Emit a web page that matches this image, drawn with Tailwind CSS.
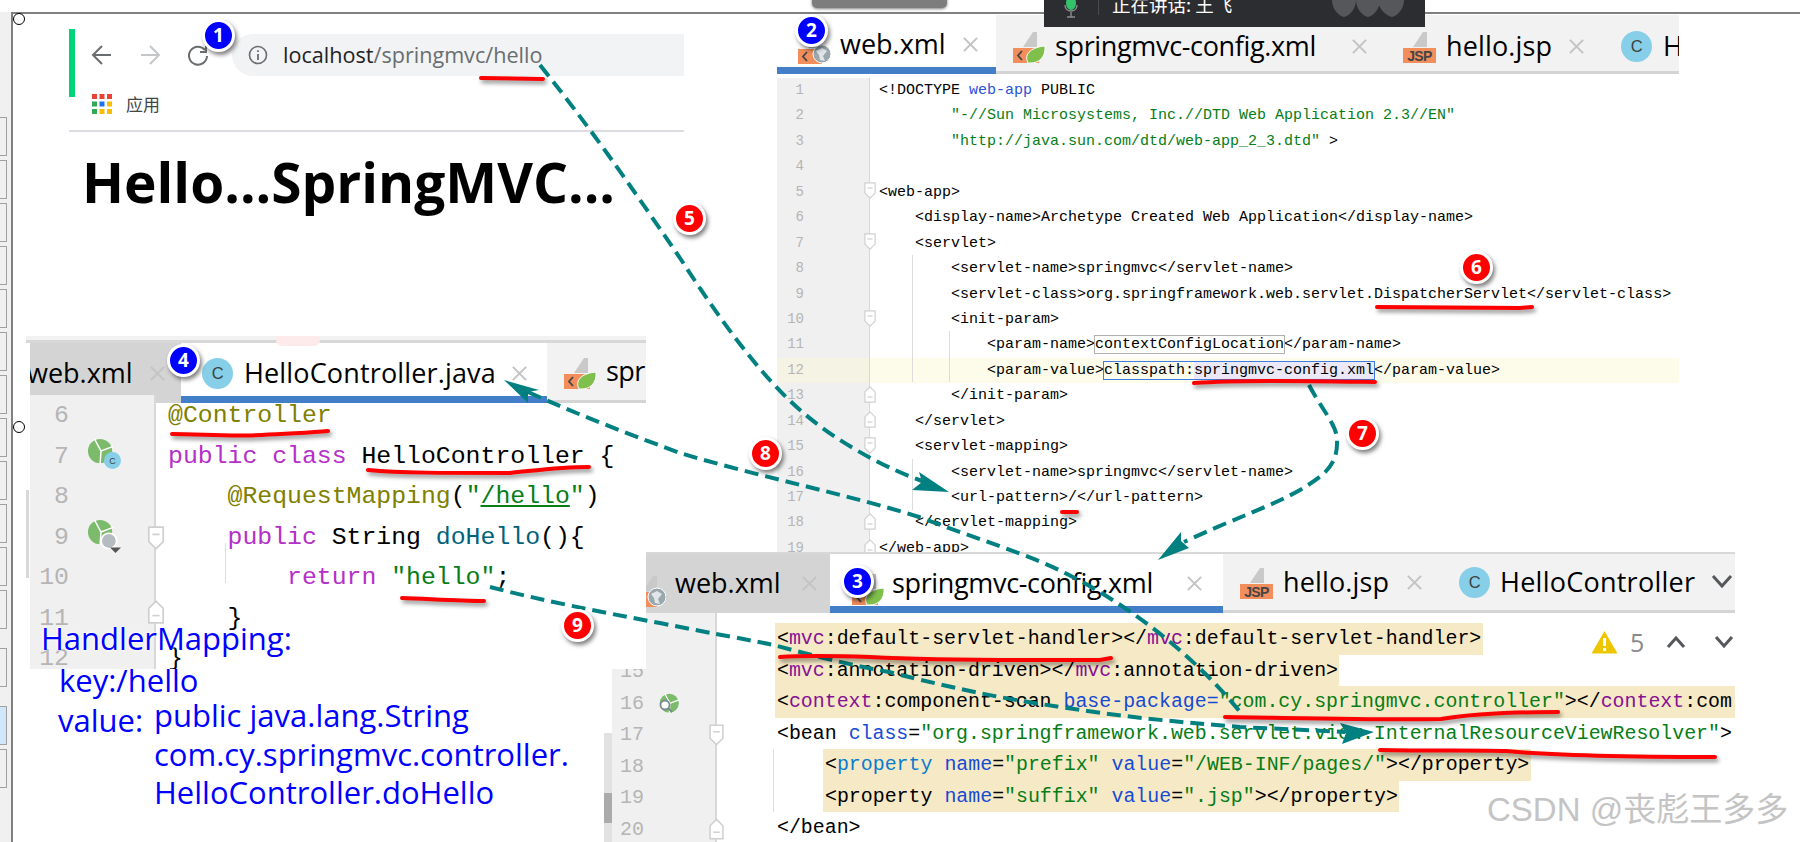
<!DOCTYPE html>
<html lang="en">

<head>
  <meta charset="UTF-8" />
  <title>SpringMVC flow</title>
  <script src="https://cdn.jsdelivr.net/npm/@tailwindcss/browser@4"></script>
</head>

<body class="bg-white overflow-hidden">
  <!-- shared icons -->
  <svg class="hidden">
    <symbol id="page" viewBox="0 0 33 34">
      <path d="M10 18 L20 3 H24 V18 Z M0 0" fill="#c9c9c9" />
      <rect x="3" y="21" width="22" height="2" fill="#c9c9c9" />
    </symbol>
    <symbol id="leaf" viewBox="0 0 33 34">
      <use href="#page" width="33" height="34" />
      <rect x="0" y="19" width="26" height="15" fill="#f28d5c" />
      <path d="M9 22 L5 26.5 L9 31" fill="none" stroke="#444" stroke-width="1.8" />
      <path d="M15 34 C10 24 20 18 32 17 C33 28 26 34 18 34 Z" fill="#7fc04c" stroke="#fff" />
    </symbol>
    <symbol id="web" viewBox="0 0 33 34">
      <use href="#page" width="33" height="34" />
      <rect x="0" y="19" width="24" height="15" fill="#f28d5c" />
      <path d="M9 22 L5 26.5 L9 31" fill="none" stroke="#444" stroke-width="1.8" />
      <circle cx="24" cy="24" r="9" fill="#9aa7ad" stroke="#fff" />
      <path d="M18 21 L24 18 L29 21 L25 26 L27 31 L22 30 L21 25 Z" fill="#dfe5e8" />
    </symbol>
    <symbol id="jsp" viewBox="0 0 33 34">
      <use href="#page" width="33" height="34" />
      <rect x="0" y="19" width="33" height="15" fill="#f28d5c" />
      <text x="16.5" y="32" text-anchor="middle" font-family="Liberation Sans" font-weight="700" font-size="14" fill="#444">JSP</text>
    </symbol>
    <symbol id="cls" viewBox="0 0 32 32">
      <circle cx="16" cy="16" r="16" fill="#87cfe8" />
      <text x="16" y="22" text-anchor="middle" font-family="Liberation Sans" font-size="17" fill="#3c3f41">C</text>
    </symbol>
    <symbol id="close" viewBox="0 0 18 18">
      <path d="M2 2 L16 16 M16 2 L2 16" stroke="#c4c4c4" stroke-width="2.2" fill="none" />
    </symbol>
    <symbol id="foldo" viewBox="0 0 14 20">
      <path d="M1 1 H13 V13 L7 19 L1 13 Z" fill="#fff" stroke="#cfcfcf" stroke-width="1.4" />
      <path d="M4 7 H10" stroke="#cfcfcf" stroke-width="1.4" />
    </symbol>
    <symbol id="foldc" viewBox="0 0 14 20">
      <path d="M1 19 H13 V7 L7 1 L1 7 Z" fill="#fff" stroke="#cfcfcf" stroke-width="1.4" />
      <path d="M4 13 H10" stroke="#cfcfcf" stroke-width="1.4" />
    </symbol>
    <symbol id="bean" viewBox="0 0 30 30">
      <circle cx="14" cy="14" r="13" fill="#7cba6c" />
      <path d="M8 1 L15 14 L28 9 M15 14 L14 28" stroke="#fff" stroke-width="1.6" fill="none" />
    </symbol>
  </svg>

  <div class="relative w-[1800px] h-[842px] overflow-hidden">

    <!-- desktop frame -->
    <div class="absolute left-0 top-[12px] w-[12px] h-[830px] bg-[#f0f0f0] flex flex-col gap-[4px] pt-[105px]">
      <div class="w-[7px] h-[39px] shrink-0 border border-l-0 border-[#a0a0a0]"></div>
      <div class="w-[7px] h-[39px] shrink-0 border border-l-0 border-[#a0a0a0]"></div>
      <div class="w-[7px] h-[39px] shrink-0 border border-l-0 border-[#a0a0a0]"></div>
      <div class="w-[7px] h-[39px] shrink-0 border border-l-0 border-[#a0a0a0]"></div>
      <div class="w-[7px] h-[39px] shrink-0 border border-l-0 border-[#a0a0a0]"></div>
      <div class="w-[7px] h-[39px] shrink-0 border border-l-0 border-[#a0a0a0]"></div>
      <div class="w-[7px] h-[39px] shrink-0 border border-l-0 border-[#a0a0a0]"></div>
      <div class="w-[7px] h-[39px] shrink-0 border border-l-0 border-[#a0a0a0]"></div>
      <div class="w-[7px] h-[39px] shrink-0 border border-l-0 border-[#a0a0a0]"></div>
      <div class="w-[7px] h-[39px] shrink-0 border border-l-0 border-[#a0a0a0]"></div>
      <div class="w-[7px] h-[39px] shrink-0 border border-l-0 border-[#a0a0a0]"></div>
      <div class="w-[7px] h-[39px] shrink-0 border border-l-0 border-[#a0a0a0]"></div>
      <div class="w-[7px] h-[39px] shrink-0 border border-l-0 border-[#a0a0a0] mt-[15px]"></div>
      <div class="w-[7px] h-[39px] shrink-0 border border-l-0 border-[#a0a0a0] mt-[15px] bg-[#cfe6fb]"></div>
      <div class="w-[7px] h-[39px] shrink-0 border border-l-0 border-[#a0a0a0]"></div>
    </div>
    <div class="absolute left-[12px] top-[12px] right-0 h-[2px] bg-[#808080]"></div>
    <div class="absolute left-[11px] top-[12px] w-[2px] h-[830px] bg-[#808080]"></div>
    <div class="absolute left-[13px] top-[13px] w-[12px] h-[12px] rounded-full border border-black bg-white"></div>
    <div class="absolute left-[13px] top-[421px] w-[12px] h-[12px] rounded-full border border-black bg-white"></div>
    <div class="absolute left-[812px] top-[-6px] w-[135px] h-[14px] rounded-[5px] bg-[#7d7d7d] shadow-[0_1px_3px_rgba(0,0,0,.5)]"></div>

    <!-- web.xml editor -->
    <div class="absolute left-[777px] top-[15px] w-[902px] h-[537px] overflow-hidden bg-white">
      <div class="flex h-[59px] font-['Open_Sans'] text-[27px] text-black tracking-[-0.6px]">
        <div class="w-[219px] shrink-0 flex items-center bg-white border-b-[7px] border-[#427fc8] pl-[21px] pt-[7px]">
          <svg class="w-[33px] h-[34px] shrink-0 mt-[4px]"><use href="#web" /></svg>
          <span class="w-[112px] ml-[9px] shrink-0 tracking-[0px]">web.xml</span>
          <svg class="w-[17px] h-[17px] shrink-0 ml-[10px]"><use href="#close" /></svg>
        </div>
        <div class="flex-1 flex items-center bg-[#f2f2f2] border-b-[3px] border-[#d4d4d4] pl-[17px] pt-[6px] min-w-0">
          <svg class="w-[33px] h-[34px] shrink-0"><use href="#leaf" /></svg>
          <span class="w-[288px] ml-[9px] shrink-0 tracking-[-0.35px]">springmvc-config.xml</span>
          <svg class="w-[17px] h-[17px] shrink-0 ml-[8px]"><use href="#close" /></svg>
          <svg class="w-[33px] h-[34px] shrink-0 ml-[35px]"><use href="#jsp" /></svg>
          <span class="w-[112px] ml-[10px] shrink-0 tracking-[0.15px]">hello.jsp</span>
          <svg class="w-[17px] h-[17px] shrink-0 ml-[10px]"><use href="#close" /></svg>
          <svg class="w-[31px] h-[31px] shrink-0 ml-[36px]"><use href="#cls" /></svg>
          <span class="ml-[11px] shrink-0 tracking-[0.2px]">HelloController</span>
        </div>
      </div>
      <div class="relative mt-[2px] pt-[2px] font-['Liberation_Mono'] text-[15px] leading-[25.45px] text-black">
        <div class="flex h-[25.45px]"><div class="w-[93px] pr-[65px] text-right text-[14px] text-[#b5b5b5] bg-[#f0f0f0] border-r border-[#d8d8d8]">1</div><pre class="ml-[9px] font-['Liberation_Mono']">&lt;!DOCTYPE <span class="text-[#2c53d9]">web-app</span> PUBLIC</pre></div>
        <div class="flex h-[25.45px]"><div class="w-[93px] pr-[65px] text-right text-[14px] text-[#b5b5b5] bg-[#f0f0f0] border-r border-[#d8d8d8]">2</div><pre class="ml-[9px] font-['Liberation_Mono'] text-[#067d17]">        "-//Sun Microsystems, Inc.//DTD Web Application 2.3//EN"</pre></div>
        <div class="flex h-[25.45px]"><div class="w-[93px] pr-[65px] text-right text-[14px] text-[#b5b5b5] bg-[#f0f0f0] border-r border-[#d8d8d8]">3</div><pre class="ml-[9px] font-['Liberation_Mono']"><span class="text-[#067d17]">        "http://java.sun.com/dtd/web-app_2_3.dtd"</span> &gt;</pre></div>
        <div class="flex h-[25.45px]"><div class="w-[93px] pr-[65px] text-right text-[14px] text-[#b5b5b5] bg-[#f0f0f0] border-r border-[#d8d8d8]">4</div></div>
        <div class="flex h-[25.45px]"><div class="w-[93px] pr-[65px] text-right text-[14px] text-[#b5b5b5] bg-[#f0f0f0] border-r border-[#d8d8d8]">5</div><pre class="ml-[9px] font-['Liberation_Mono']">&lt;web-app&gt;</pre></div>
        <div class="flex h-[25.45px]"><div class="w-[93px] pr-[65px] text-right text-[14px] text-[#b5b5b5] bg-[#f0f0f0] border-r border-[#d8d8d8]">6</div><pre class="ml-[9px] font-['Liberation_Mono']">    &lt;display-name&gt;Archetype Created Web Application&lt;/display-name&gt;</pre></div>
        <div class="flex h-[25.45px]"><div class="w-[93px] pr-[65px] text-right text-[14px] text-[#b5b5b5] bg-[#f0f0f0] border-r border-[#d8d8d8]">7</div><pre class="ml-[9px] font-['Liberation_Mono']">    &lt;servlet&gt;</pre></div>
        <div class="flex h-[25.45px]"><div class="w-[93px] pr-[65px] text-right text-[14px] text-[#b5b5b5] bg-[#f0f0f0] border-r border-[#d8d8d8]">8</div><pre class="ml-[9px] font-['Liberation_Mono']">        &lt;servlet-name&gt;springmvc&lt;/servlet-name&gt;</pre></div>
        <div class="flex h-[25.45px]"><div class="w-[93px] pr-[65px] text-right text-[14px] text-[#b5b5b5] bg-[#f0f0f0] border-r border-[#d8d8d8]">9</div><pre class="ml-[9px] font-['Liberation_Mono']">        &lt;servlet-class&gt;org.springframework.web.servlet.DispatcherServlet&lt;/servlet-class&gt;</pre></div>
        <div class="flex h-[25.45px]"><div class="w-[93px] pr-[65px] text-right text-[14px] text-[#b5b5b5] bg-[#f0f0f0] border-r border-[#d8d8d8]">10</div><pre class="ml-[9px] font-['Liberation_Mono']">        &lt;init-param&gt;</pre></div>
        <div class="flex h-[25.45px]"><div class="w-[93px] pr-[65px] text-right text-[14px] text-[#b5b5b5] bg-[#f0f0f0] border-r border-[#d8d8d8]">11</div><pre class="ml-[9px] font-['Liberation_Mono']">            &lt;param-name&gt;<span class="outline outline-1 outline-[#b0b0b0]">contextConfigLocation</span>&lt;/param-name&gt;</pre></div>
        <div class="flex h-[25.45px] bg-[#fdfbea]"><div class="w-[93px] pr-[65px] text-right text-[14px] text-[#b5b5b5] bg-[#f5f3e4] border-r border-[#d8d8d8]">12</div><pre class="ml-[9px] font-['Liberation_Mono']">            &lt;param-value&gt;<span class="outline outline-1 outline-[#3f7ee0]">classpath:<span class="bg-[#ebe8f8]">springmvc-config.xml</span></span>&lt;/param-value&gt;</pre></div>
        <div class="flex h-[25.45px]"><div class="w-[93px] pr-[65px] text-right text-[14px] text-[#b5b5b5] bg-[#f0f0f0] border-r border-[#d8d8d8]">13</div><pre class="ml-[9px] font-['Liberation_Mono']">        &lt;/init-param&gt;</pre></div>
        <div class="flex h-[25.45px]"><div class="w-[93px] pr-[65px] text-right text-[14px] text-[#b5b5b5] bg-[#f0f0f0] border-r border-[#d8d8d8]">14</div><pre class="ml-[9px] font-['Liberation_Mono']">    &lt;/servlet&gt;</pre></div>
        <div class="flex h-[25.45px]"><div class="w-[93px] pr-[65px] text-right text-[14px] text-[#b5b5b5] bg-[#f0f0f0] border-r border-[#d8d8d8]">15</div><pre class="ml-[9px] font-['Liberation_Mono']">    &lt;servlet-mapping&gt;</pre></div>
        <div class="flex h-[25.45px]"><div class="w-[93px] pr-[65px] text-right text-[14px] text-[#b5b5b5] bg-[#f0f0f0] border-r border-[#d8d8d8]">16</div><pre class="ml-[9px] font-['Liberation_Mono']">        &lt;servlet-name&gt;springmvc&lt;/servlet-name&gt;</pre></div>
        <div class="flex h-[25.45px]"><div class="w-[93px] pr-[65px] text-right text-[14px] text-[#b5b5b5] bg-[#f0f0f0] border-r border-[#d8d8d8]">17</div><pre class="ml-[9px] font-['Liberation_Mono']">        &lt;url-pattern&gt;/&lt;/url-pattern&gt;</pre></div>
        <div class="flex h-[25.45px]"><div class="w-[93px] pr-[65px] text-right text-[14px] text-[#b5b5b5] bg-[#f0f0f0] border-r border-[#d8d8d8]">18</div><pre class="ml-[9px] font-['Liberation_Mono']">    &lt;/servlet-mapping&gt;</pre></div>
        <div class="flex h-[25.45px]"><div class="w-[93px] pr-[65px] text-right text-[14px] text-[#b5b5b5] bg-[#f0f0f0] border-r border-[#d8d8d8]">19</div><pre class="ml-[9px] font-['Liberation_Mono']">&lt;/web-app&gt;</pre></div>

        <!-- fold markers and indent guides -->
        <svg class="absolute left-[87px] top-[106px] w-[12px] h-[17px]"><use href="#foldo" /></svg>
        <svg class="absolute left-[87px] top-[157px] w-[12px] h-[17px]"><use href="#foldo" /></svg>
        <svg class="absolute left-[87px] top-[234px] w-[12px] h-[17px]"><use href="#foldo" /></svg>
        <svg class="absolute left-[87px] top-[310px] w-[12px] h-[17px]"><use href="#foldc" /></svg>
        <svg class="absolute left-[87px] top-[335px] w-[12px] h-[17px]"><use href="#foldc" /></svg>
        <svg class="absolute left-[87px] top-[361px] w-[12px] h-[17px]"><use href="#foldo" /></svg>
        <svg class="absolute left-[87px] top-[437px] w-[12px] h-[17px]"><use href="#foldc" /></svg>
        <svg class="absolute left-[87px] top-[463px] w-[12px] h-[17px]"><use href="#foldc" /></svg>
        <div class="absolute left-[135px] top-[179px] w-px h-[127px] bg-[#dcdcdc]"></div>
        <div class="absolute left-[172px] top-[255px] w-px h-[51px] bg-[#dcdcdc]"></div>
        <div class="absolute left-[135px] top-[383px] w-px h-[51px] bg-[#dcdcdc]"></div>
      </div>
    </div>

    <!-- screen share bar -->
    <div class="absolute left-[1044px] top-0 w-[381px] h-[27px] bg-[#2b2d30] overflow-hidden flex items-start">
      <svg class="w-[18px] h-[20px] ml-[18px] shrink-0" viewBox="0 0 18 20">
        <ellipse cx="9" cy="3" rx="5" ry="7" fill="#33c36b" />
        <path d="M3 5 C3 13 15 13 15 5 M9 12 V17 M5 17 H13" stroke="#8a8d90" stroke-width="1.4" fill="none" />
      </svg>
      <div class="w-px h-[15px] bg-[#4a4c50] ml-[18px] shrink-0"></div>
      <span class="ml-[13px] -mt-[9px] text-[18.5px] text-white shrink-0 font-['Noto_Sans_CJK_SC',sans-serif]">正在讲话: 王飞</span>
      <svg class="w-[72px] h-[18px] ml-[100px] shrink-0" viewBox="0 0 72 18">
        <path d="M0 0 H24 C24 8 18 16 12 17 C6 16 0 8 0 0 Z M24 0 H48 C48 8 42 16 36 17 C30 16 24 8 24 0 Z M46 0 H72 C72 8 66 16 60 17 C54 16 46 8 46 0 Z" fill="#55575a" />
      </svg>
    </div>

    <!-- browser -->
    <div class="absolute left-[69px] top-[29px] w-[615px] h-[103px] bg-white border-b-2 border-[#dcdce2] flex">
      <div class="w-[6px] h-[68px] bg-[#00d47a] shrink-0"></div>
      <div class="flex-1 flex flex-col min-w-0">
        <div class="flex items-center h-[42px] mt-[5px]">
          <svg class="w-[22px] h-[22px] ml-[16px] shrink-0" viewBox="0 0 22 22"><path d="M20 11 H3 M11 2 L2 11 L11 20" fill="none" stroke="#6a6d70" stroke-width="2" /></svg>
          <svg class="w-[22px] h-[22px] ml-[26px] shrink-0" viewBox="0 0 22 22"><path d="M2 11 H19 M11 2 L20 11 L11 20" fill="none" stroke="#c4c6c8" stroke-width="2" /></svg>
          <svg class="w-[22px] h-[22px] ml-[26px] shrink-0" viewBox="0 0 22 22"><path d="M18 6 A9 9 0 1 0 20 12 M19 2 V8 H13" fill="none" stroke="#6a6d70" stroke-width="2" /></svg>
          <div class="ml-[23px] flex-1 h-[42px] bg-[#f1f3f4] rounded-l-[21px] flex items-center min-w-0 font-['Open_Sans'] text-[21.6px] text-[#6a6d70]">
            <svg class="w-[20px] h-[20px] ml-[16px] shrink-0" viewBox="0 0 20 20"><circle cx="10" cy="10" r="8.5" fill="none" stroke="#6a6d70" stroke-width="1.6" /><path d="M10 9 V15 M10 5.2 V7" stroke="#6a6d70" stroke-width="1.8" /></svg>
            <span class="ml-[15px] shrink-0"><span class="text-[#1f2226]">localhost</span>/springmvc/hello</span>
          </div>
        </div>
        <div class="flex items-center h-[22px] mt-[17px] ml-[17px]">
          <svg class="w-[20px] h-[20px] shrink-0" viewBox="0 0 20 20">
            <rect x="0" y="0" width="5" height="5" fill="#ea4335" /><rect x="7.500" y="0" width="5" height="5" fill="#ea4335" /><rect x="15" y="0" width="5" height="5" fill="#ea4335" />
            <rect x="0" y="7.500" width="5" height="5" fill="#34a853" /><rect x="7.500" y="7.500" width="5" height="5" fill="#1a73e8" /><rect x="15" y="7.500" width="5" height="5" fill="#fbbc04" />
            <rect x="0" y="15" width="5" height="5" fill="#34a853" /><rect x="7.500" y="15" width="5" height="5" fill="#fbbc04" /><rect x="15" y="15" width="5" height="5" fill="#fbbc04" />
          </svg>
          <span class="ml-[14px] text-[17px] text-[#444] font-['Noto_Sans_CJK_SC',sans-serif]">应用</span>
        </div>
      </div>
    </div>
    <h1 class="absolute left-[82px] top-[146px] text-[55px] leading-[72px] font-bold font-['Open_Sans'] tracking-[0px] text-black">Hello...SpringMVC...</h1>

    <!-- HelloController editor -->
    <div class="absolute left-[26px] top-[336px] w-[620px] h-[333px] overflow-hidden bg-white">
      <div class="h-[4px] bg-[#f2f2f2]"></div>
      <div class="h-[3px] bg-[#d8d8d8]"></div>
      <div class="absolute left-[250px] top-0 w-[44px] h-[10px] rounded-b-[6px] bg-[#fdeaea]"></div>
      <div class="flex h-[60px] ml-[4px] font-['Open_Sans'] text-[27px] tracking-[-0.6px] text-black">
        <div class="w-[151px] shrink-0 flex items-center bg-[#d4d4d4] overflow-hidden">
          <span class="w-[103px] shrink-0 -ml-[3px] tracking-[0px]">web.xml</span>
          <svg class="w-[17px] h-[17px] shrink-0 ml-[19px]"><use href="#close" /></svg>
        </div>
        <div class="w-[366px] shrink-0 flex items-center bg-white border-b-[7px] border-[#427fc8] pl-[21px] pt-[7px]">
          <svg class="w-[31px] h-[31px] shrink-0"><use href="#cls" /></svg>
          <span class="w-[253px] ml-[11px] shrink-0 tracking-[0.15px]">HelloController.java</span>
          <svg class="w-[17px] h-[17px] shrink-0 ml-[14px]"><use href="#close" /></svg>
        </div>
        <div class="flex-1 flex items-center bg-[#f2f2f2] border-b-[3px] border-[#d4d4d4] pl-[17px] min-w-0 overflow-hidden">
          <svg class="w-[33px] h-[34px] shrink-0"><use href="#leaf" /></svg>
          <span class="ml-[9px] shrink-0">spr</span>
        </div>
      </div>
      <div class="relative ml-[4px] font-['Liberation_Mono'] text-[24.8px] leading-[40.5px] -mt-[8px] pt-[-4px]">
        <div class="flex h-[40.5px]"><div class="w-[126px] pr-[85px] text-right text-[#b5b5b5] bg-[#f0f0f0] border-r-2 border-[#d8d8d8]">6</div><pre class="ml-[12px] font-['Liberation_Mono'] text-[#808000]">@Controller</pre></div>
        <div class="flex h-[40.5px]"><div class="w-[126px] pr-[85px] text-right text-[#b5b5b5] bg-[#f0f0f0] border-r-2 border-[#d8d8d8]">7</div><pre class="ml-[12px] font-['Liberation_Mono'] text-black"><span class="text-[#b530c8]">public class</span> HelloController {</pre></div>
        <div class="flex h-[40.5px]"><div class="w-[126px] pr-[85px] text-right text-[#b5b5b5] bg-[#f0f0f0] border-r-2 border-[#d8d8d8]">8</div><pre class="ml-[12px] font-['Liberation_Mono'] text-[#808000]">    @RequestMapping<span class="text-black">(</span><span class="text-[#067d17]">"<span class="underline">/hello</span>"</span><span class="text-black">)</span></pre></div>
        <div class="flex h-[40.5px]"><div class="w-[126px] pr-[85px] text-right text-[#b5b5b5] bg-[#f0f0f0] border-r-2 border-[#d8d8d8]">9</div><pre class="ml-[12px] font-['Liberation_Mono'] text-black"><span class="text-[#b530c8]">    public</span> String <span class="text-[#00627a]">doHello</span>(){</pre></div>
        <div class="flex h-[40.5px]"><div class="w-[126px] pr-[85px] text-right text-[#b5b5b5] bg-[#f0f0f0] border-r-2 border-[#d8d8d8]">10</div><pre class="ml-[12px] font-['Liberation_Mono'] text-black"><span class="text-[#b530c8]">        return</span> <span class="text-[#067d17]">"hello"</span>;</pre></div>
        <div class="flex h-[40.5px]"><div class="w-[126px] pr-[85px] text-right text-[#b5b5b5] bg-[#f0f0f0] border-r-2 border-[#d8d8d8]">11</div><pre class="ml-[12px] font-['Liberation_Mono'] text-black">    }</pre></div>
        <div class="flex h-[40.5px]"><div class="w-[126px] pr-[85px] text-right text-[#b5b5b5] bg-[#f0f0f0] border-r-2 border-[#d8d8d8]">12</div><pre class="ml-[12px] font-['Liberation_Mono'] text-black">}</pre></div>
        <svg class="absolute left-[57px] top-[43px] w-[28px] h-[28px]"><use href="#bean" /></svg>
        <svg class="absolute left-[74px] top-[57px] w-[17px] h-[17px]"><use href="#cls" /></svg>
        <svg class="absolute left-[57px] top-[124px] w-[28px] h-[28px]"><use href="#bean" /></svg>
        <svg class="absolute left-[69px] top-[136px] w-[22px] h-[22px]" viewBox="0 0 20 20"><circle cx="9" cy="9" r="7" fill="#b5bcc0" stroke="#fff" stroke-width="1.5" /><path d="M10 15 H20 L15 20 Z" fill="#555" /></svg>
        <svg class="absolute left-[117px] top-[131px] w-[18px] h-[24px]"><use href="#foldo" /></svg>
        <svg class="absolute left-[117px] top-[205px] w-[18px] h-[24px]"><use href="#foldc" /></svg>
        <div class="absolute left-[195px] top-[148px] w-px h-[40px] bg-[#dcdcdc]"></div>
      </div>
    </div>
    <div class="absolute left-[26px] top-[490px] w-[3px] h-[88px] bg-[#d8d8d8]"></div>

    <!-- springmvc-config editor -->
    <div class="absolute left-[604px] top-[733px] w-[8px] h-[109px] bg-[#e2e2e2]"><div class="w-full h-[30px] mt-[60px] bg-[#ababab]"></div></div>
    <div class="absolute left-[612px] top-[669px] w-[34px] h-[173px] bg-[#f0f0f0] overflow-hidden font-['Liberation_Mono'] text-[20px] leading-[31.5px] text-[#b5b5b5] text-right pr-[2px]">
      <div class="-mt-[13px]">15</div>
      <div>16</div>
      <div>17</div>
      <div>18</div>
      <div>19</div>
      <div>20</div>
    </div>
    <div class="absolute left-[646px] top-[552px] w-[1089px] h-[290px] overflow-hidden bg-white">
      <div class="flex h-[61px] border-t-2 border-[#d8d8d8] font-['Open_Sans'] text-[27px] tracking-[-0.6px] text-black">
        <div class="w-[184px] shrink-0 flex items-center bg-[#d4d4d4] overflow-hidden">
          <svg class="w-[33px] h-[34px] shrink-0 -ml-[13px] mt-[12px]"><use href="#web" /></svg>
          <span class="w-[112px] ml-[9px] shrink-0 tracking-[0px]">web.xml</span>
          <svg class="w-[17px] h-[17px] shrink-0 ml-[14px]"><use href="#close" /></svg>
        </div>
        <div class="w-[393px] shrink-0 flex items-center bg-white border-b-[7px] border-[#427fc8] pl-[22px] pt-[7px]">
          <svg class="w-[33px] h-[34px] shrink-0 mt-[8px]"><use href="#leaf" /></svg>
          <span class="w-[285px] ml-[7px] shrink-0 tracking-[-0.35px]">springmvc-config.xml</span>
          <svg class="w-[17px] h-[17px] shrink-0 ml-[9px]"><use href="#close" /></svg>
        </div>
        <div class="flex-1 relative flex items-center bg-[#f2f2f2] border-b-[3px] border-[#d4d4d4] pl-[17px] min-w-0">
          <svg class="w-[33px] h-[34px] shrink-0"><use href="#jsp" /></svg>
          <span class="w-[112px] ml-[10px] shrink-0 tracking-[0.15px]">hello.jsp</span>
          <svg class="w-[17px] h-[17px] shrink-0 ml-[11px]"><use href="#close" /></svg>
          <svg class="w-[31px] h-[31px] shrink-0 ml-[36px]"><use href="#cls" /></svg>
          <span class="ml-[10px] shrink-0 tracking-[0.25px]">HelloController</span>
          <svg class="absolute right-[2px] top-[20px] w-[22px] h-[14px]" viewBox="0 0 22 14"><path d="M2 2 L11 12 L20 2" fill="none" stroke="#55585c" stroke-width="3" /></svg>
        </div>
      </div>
      <div class="relative flex">
        <div class="w-[71px] h-[229px] shrink-0 bg-[#f0f0f0] border-r-2 border-[#d8d8d8]"></div>
        <div class="flex-1 min-w-0 overflow-hidden pt-[10px] font-['Liberation_Mono'] text-[19.9px] leading-[31.5px] text-black">
          <pre class="ml-[58px] w-[708px] pl-[2px] h-[31.5px] bg-[#f6e9c5] font-['Liberation_Mono']">&lt;<span class="text-[#871094]">mvc</span>:default-servlet-handler&gt;&lt;/<span class="text-[#871094]">mvc</span>:default-servlet-handler&gt;</pre>
          <pre class="ml-[58px] w-[564px] pl-[2px] h-[31.5px] bg-[#f6e9c5] font-['Liberation_Mono']">&lt;<span class="text-[#871094]">mvc</span>:annotation-driven&gt;&lt;/<span class="text-[#871094]">mvc</span>:annotation-driven&gt;</pre>
          <pre class="ml-[58px] pl-[2px] h-[31.5px] bg-[#f6e9c5] overflow-hidden font-['Liberation_Mono']">&lt;<span class="text-[#871094]">context</span>:component-scan <span class="text-[#174ad4]">base-package</span><span class="text-[#174ad4]">=</span><span class="text-[#067d17]">"com.cy.springmvc.controller"</span>&gt;&lt;/<span class="text-[#871094]">context</span>:com</pre>
          <pre class="ml-[58px] pl-[2px] h-[31.5px] font-['Liberation_Mono']">&lt;bean <span class="text-[#174ad4]">class</span>=<span class="text-[#067d17]">"org.springframework.web.servlet.view.InternalResourceViewResolver"</span>&gt;</pre>
          <pre class="ml-[106px] w-[708px] pl-[2px] h-[31.5px] bg-[#f6e9c5] font-['Liberation_Mono']">&lt;<span class="text-[#0a7cd0]">property</span> <span class="text-[#174ad4]">name</span>=<span class="text-[#067d17]">"prefix"</span> <span class="text-[#174ad4]">value</span>=<span class="text-[#067d17]">"/WEB-INF/pages/"</span>&gt;&lt;/property&gt;</pre>
          <pre class="ml-[106px] w-[576px] pl-[2px] h-[31.5px] bg-[#f6e9c5] font-['Liberation_Mono']">&lt;property <span class="text-[#174ad4]">name</span>=<span class="text-[#067d17]">"suffix"</span> <span class="text-[#174ad4]">value</span>=<span class="text-[#067d17]">".jsp"</span>&gt;&lt;/property&gt;</pre>
          <pre class="ml-[58px] pl-[2px] h-[31.5px] font-['Liberation_Mono']">&lt;/bean&gt;</pre>
        </div>
        <!-- inspections -->
        <svg class="absolute left-[945px] top-[17px] w-[27px] h-[24px]" viewBox="0 0 27 24"><path d="M13.500 1 L26.500 23.500 H0.500 Z" fill="#edc600" /><path d="M13.500 8 V16 M13.500 18 V21" stroke="#fff" stroke-width="3" /></svg>
        <span class="absolute left-[984px] top-[11px] font-['Open_Sans'] text-[25px] leading-[36px] text-[#8a8a8a]">5</span>
        <svg class="absolute left-[1020px] top-[22px] w-[20px] h-[14px]" viewBox="0 0 20 14"><path d="M2 12 L10 3 L18 12" fill="none" stroke="#55585c" stroke-width="3" /></svg>
        <svg class="absolute left-[1068px] top-[22px] w-[20px] h-[14px]" viewBox="0 0 20 14"><path d="M2 2 L10 11 L18 2" fill="none" stroke="#55585c" stroke-width="3" /></svg>
        <svg class="absolute left-[13px] top-[80px] w-[22px] h-[22px]"><use href="#bean" /></svg>
        <svg class="absolute left-[13px] top-[86px] w-[14px] h-[14px]" viewBox="0 0 14 14"><circle cx="6" cy="6" r="4.5" fill="#fff" stroke="#7b8a90" stroke-width="1.8" /><path d="M9 9 L13 13" stroke="#7b8a90" stroke-width="2" /></svg>
        <svg class="absolute left-[63px] top-[111px] w-[15px] h-[22px]"><use href="#foldo" /></svg>
        <svg class="absolute left-[63px] top-[205px] w-[15px] h-[22px]"><use href="#foldc" /></svg>
        <div class="absolute left-[127px] top-[136px] w-px h-[63px] bg-[#dcdcdc]"></div>
      </div>
    </div>

    <!-- note -->
    <div class="absolute left-[41px] top-[619px] font-['Open_Sans'] text-[31px] leading-[38.5px] text-[#0000ff]">
      <div class="[text-shadow:0_0_3px_white,0_0_3px_white]">HandlerMapping:</div>
      <div class="ml-[18px] mt-[3px]">key:/hello</div>
      <div class="flex ml-[17px]">
        <span class="w-[96px] shrink-0 pt-[2px]">value:</span>
        <div class="-mt-[3px] whitespace-nowrap">
          <div>public java.lang.String</div>
          <div>com.cy.springmvc.controller.</div>
          <div>HelloController.doHello</div>
        </div>
      </div>
    </div>

    <!-- arrows and marks -->
    <svg class="absolute inset-0 w-[1800px] h-[842px] pointer-events-none" viewBox="0 0 1800 842" fill="none">
      <g stroke="#008080" stroke-width="4" stroke-dasharray="14 7">
        <path d="M540 65 C600 140 640 200 680 258 C720 320 760 375 800 410 C840 445 890 470 925 482" />
        <path d="M528 392 C590 420 640 438 680 453 C760 477 850 495 919 517 C980 540 1030 555 1065 573 C1120 600 1190 650 1240 712" />
        <path d="M1309 385 C1322 410 1337 425 1337 440 C1338 465 1325 475 1300 490 C1270 507 1230 520 1184 542" />
        <path d="M490 587 C540 600 600 612 660 623 C720 635 750 640 774 645 C810 655 850 665 889 672 C960 690 1010 700 1061 707 C1130 718 1180 722 1240 727 C1280 729 1310 730 1345 732" />
      </g>
      <g fill="#008080">
        <path d="M949 492 L919 472 L922 482 L912 490 Z" />
        <path d="M504 380 L539 390 L528 392 L528 403 Z" />
        <path d="M1158 560 L1181 532 L1181 541 L1189 548 Z" />
        <path d="M1374 732 L1340 723 L1346 733 L1342 744 Z" />
      </g>
      <g stroke="#ff0000" stroke-width="4" stroke-linecap="round" class="drop-shadow-[2px_3px_2px_rgba(0,0,0,0.45)]">
        <path d="M481 78 L543 79" />
        <path d="M1377 307 C1430 307 1480 308 1520 308 L1532 307" />
        <path d="M1194 383 C1240 380 1300 381 1375 382" />
        <path d="M1062 512 L1077 512" />
        <path d="M172 434 C200 434 230 437 262 435 C290 433 310 433 328 431" />
        <path d="M368 470 C400 473 440 473 510 473 C540 470 560 467 589 467" />
        <path d="M402 598 C430 599 460 601 484 601" />
        <path d="M780 657 C810 655 840 656 870 657 C950 661 1040 660 1100 660 L1111 658" />
        <path d="M1225 717 C1300 718 1380 720 1441 719 C1470 714 1510 712 1558 712" />
        <path d="M1380 750 C1430 751 1480 750 1506 751 C1560 756 1650 757 1715 757" />
      </g>
    </svg>

    <!-- numbered badges -->
    <div class="absolute left-[202px] top-[19px] w-[33px] h-[33px] rounded-full border-[3px] border-white bg-[#0000ff] flex items-center justify-center text-white font-bold text-[19px] font-['Open_Sans'] shadow-[2px_3px_4px_rgba(0,0,0,0.5)]">1</div>
    <div class="absolute left-[795px] top-[14px] w-[33px] h-[33px] rounded-full border-[3px] border-white bg-[#0000ff] flex items-center justify-center text-white font-bold text-[19px] font-['Open_Sans'] shadow-[2px_3px_4px_rgba(0,0,0,0.5)]">2</div>
    <div class="absolute left-[841px] top-[565px] w-[33px] h-[33px] rounded-full border-[3px] border-white bg-[#0000ff] flex items-center justify-center text-white font-bold text-[19px] font-['Open_Sans'] shadow-[2px_3px_4px_rgba(0,0,0,0.5)]">3</div>
    <div class="absolute left-[167px] top-[344px] w-[33px] h-[33px] rounded-full border-[3px] border-white bg-[#0000ff] flex items-center justify-center text-white font-bold text-[19px] font-['Open_Sans'] shadow-[2px_3px_4px_rgba(0,0,0,0.5)]">4</div>
    <div class="absolute left-[673px] top-[202px] w-[33px] h-[33px] rounded-full border-[3px] border-white bg-[#ff0000] flex items-center justify-center text-white font-bold text-[19px] font-['Open_Sans'] shadow-[2px_3px_4px_rgba(0,0,0,0.5)]">5</div>
    <div class="absolute left-[1460px] top-[251px] w-[33px] h-[33px] rounded-full border-[3px] border-white bg-[#ff0000] flex items-center justify-center text-white font-bold text-[19px] font-['Open_Sans'] shadow-[2px_3px_4px_rgba(0,0,0,0.5)]">6</div>
    <div class="absolute left-[1346px] top-[417px] w-[33px] h-[33px] rounded-full border-[3px] border-white bg-[#ff0000] flex items-center justify-center text-white font-bold text-[19px] font-['Open_Sans'] shadow-[2px_3px_4px_rgba(0,0,0,0.5)]">7</div>
    <div class="absolute left-[749px] top-[437px] w-[33px] h-[33px] rounded-full border-[3px] border-white bg-[#ff0000] flex items-center justify-center text-white font-bold text-[19px] font-['Open_Sans'] shadow-[2px_3px_4px_rgba(0,0,0,0.5)]">8</div>
    <div class="absolute left-[561px] top-[609px] w-[33px] h-[33px] rounded-full border-[3px] border-white bg-[#ff0000] flex items-center justify-center text-white font-bold text-[19px] font-['Open_Sans'] shadow-[2px_3px_4px_rgba(0,0,0,0.5)]">9</div>

    <!-- watermark -->
    <div class="absolute left-[1487px] top-[786px] text-[33px] leading-[48px] whitespace-nowrap text-[#c4c4c4] font-['Liberation_Sans','Noto_Sans_CJK_SC',sans-serif] [text-shadow:1px_1px_2px_rgba(255,255,255,0.9)]">CSDN @丧彪王多多</div>
  </div>
</body>

</html>
